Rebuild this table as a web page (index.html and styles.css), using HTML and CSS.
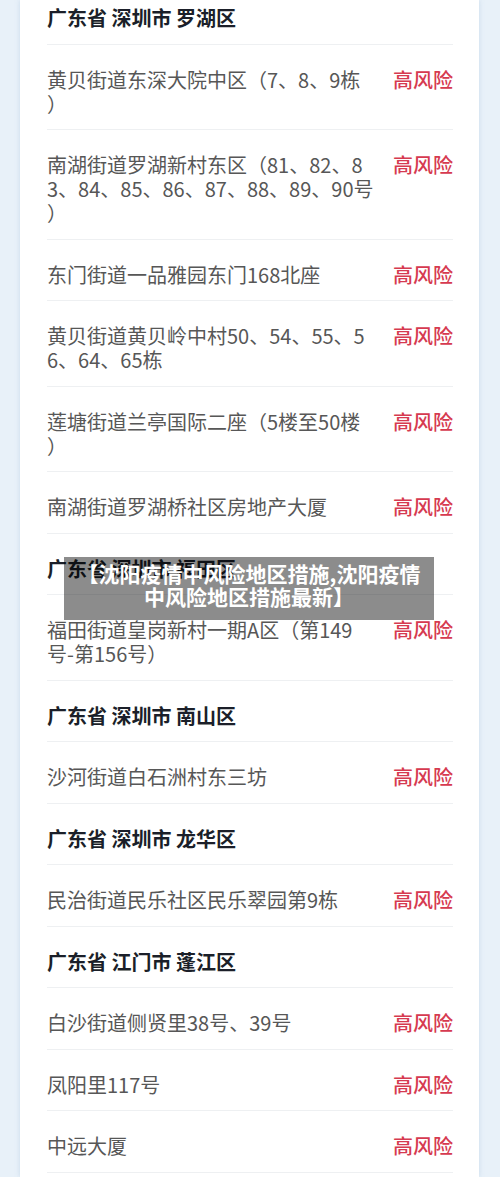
FILE: index.html
```html
<!DOCTYPE html>
<html lang="zh-CN">
<head>
  <meta charset="UTF-8">
  <meta name="viewport" content="width=device-width, initial-scale=1.0">
  <title>沈阳疫情中风险地区措施</title>
  <link rel="stylesheet" href="styles.css">
</head>
<body>
  <div class="page">
    <div class="card">
      <div class="row head first">广东省 深圳市 罗湖区</div>
      <div class="row"><span class="addr">黄贝街道东深大院中区（7、8、9栋<br>）</span><span class="risk">高风险</span></div>
      <div class="row"><span class="addr">南湖街道罗湖新村东区（81、82、8<br>3、84、85、86、87、88、89、90号<br>）</span><span class="risk">高风险</span></div>
      <div class="row"><span class="addr">东门街道一品雅园东门168北座</span><span class="risk">高风险</span></div>
      <div class="row"><span class="addr">黄贝街道黄贝岭中村50、54、55、5<br>6、64、65栋</span><span class="risk">高风险</span></div>
      <div class="row"><span class="addr">莲塘街道兰亭国际二座（5楼至50楼<br>）</span><span class="risk">高风险</span></div>
      <div class="row"><span class="addr">南湖街道罗湖桥社区房地产大厦</span><span class="risk">高风险</span></div>

      <div class="row head">广东省 深圳市 福田区</div>
      <div class="row"><span class="addr">福田街道皇岗新村一期A区（第149<br>号-第156号）</span><span class="risk">高风险</span></div>

      <div class="row head">广东省 深圳市 南山区</div>
      <div class="row"><span class="addr">沙河街道白石洲村东三坊</span><span class="risk">高风险</span></div>

      <div class="row head">广东省 深圳市 龙华区</div>
      <div class="row"><span class="addr">民治街道民乐社区民乐翠园第9栋</span><span class="risk">高风险</span></div>

      <div class="row head">广东省 江门市 蓬江区</div>
      <div class="row"><span class="addr">白沙街道侧贤里38号、39号</span><span class="risk">高风险</span></div>
      <div class="row"><span class="addr">凤阳里117号</span><span class="risk">高风险</span></div>
      <div class="row"><span class="addr">中远大厦</span><span class="risk">高风险</span></div>
    </div>

    <div class="caption">【沈阳疫情中风险地区措施,沈阳疫情<br>中风险地区措施最新】</div>
  </div>
</body>
</html>
```

FILE: styles.css
```css
html, body {
  margin: 0;
  padding: 0;
}
body {
  font-family: "Noto Sans CJK SC", "Noto Sans", sans-serif;
  background-color: #e8f1f9;
  height: 1177px;
  overflow: hidden;
}
.page {
  position: relative;
}
.card {
  margin: 0 21px 0 20px;
  padding: 0 26px 0 27px;
  background: #fff;
  box-shadow: 0 0 5px rgba(140, 175, 210, 0.35);
  min-height: 1177px;
  box-sizing: border-box;
}
.row {
  display: flex;
  justify-content: space-between;
  align-items: flex-start;
  padding: 23px 0 13.5px;
  border-bottom: 1px solid #eef0f2;
  font-size: 20px;
  line-height: 24px;
}
.row.first {
  padding-top: 6px;
}
.head {
  font-weight: 700;
  color: #1b1f29;
}
.addr {
  flex: 1;
  color: #575757;
}
.risk {
  margin-left: 6px;
  color: #d63a50;
  font-weight: 500;
  white-space: nowrap;
}
.caption {
  position: absolute;
  top: 557px;
  left: 64px;
  width: 370px;
  height: 63px;
  padding-top: 5px;
  box-sizing: border-box;
  background: rgba(0, 0, 0, 0.45);
  color: #fff;
  font-size: 21px;
  font-weight: 700;
  line-height: 23px;
  text-align: center;
  white-space: nowrap;
}
```
